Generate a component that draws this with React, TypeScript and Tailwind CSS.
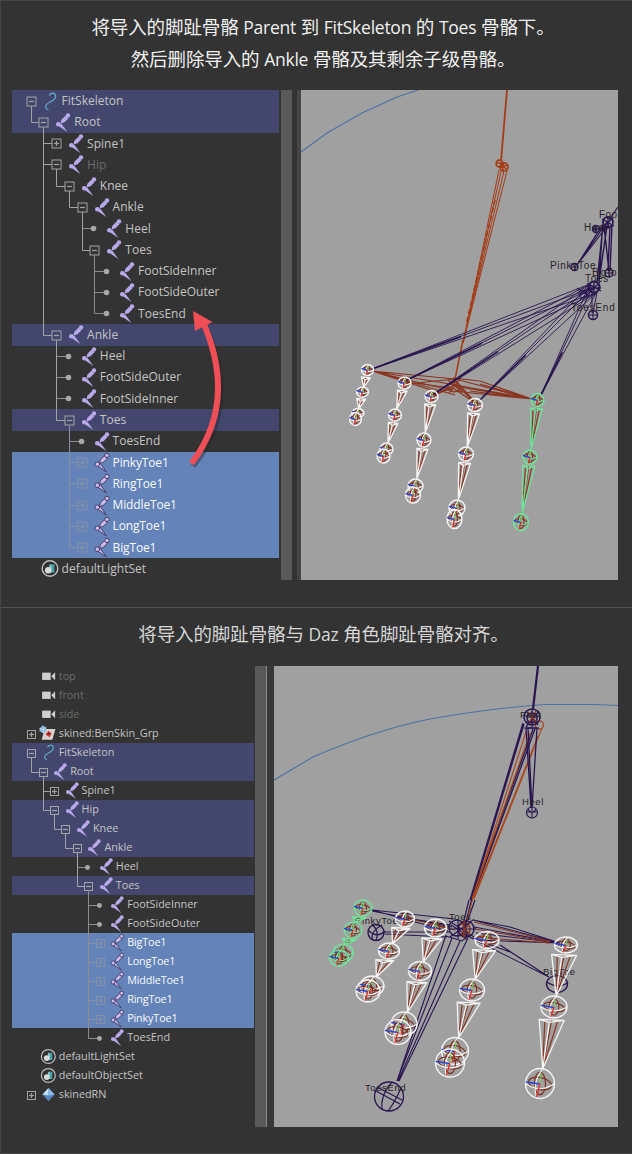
import React from "react";

type Toggle = "minus" | "plus" | "dot" | "none";
type IconName = "joint" | "curve" | "set" | "camera" | "group" | "ref";
type Tone = "normal" | "dim" | "related" | "selected";
interface Item {
  level: number;
  toggle: Toggle;
  icon: IconName;
  label: string;
  tone?: Tone;
  faded?: boolean;
}

const upper: Item[] = [
  { level: 0, toggle: "minus", icon: "curve", label: "FitSkeleton", tone: "related" },
  { level: 1, toggle: "minus", icon: "joint", label: "Root", tone: "related" },
  { level: 2, toggle: "plus", icon: "joint", label: "Spine1" },
  { level: 2, toggle: "minus", icon: "joint", label: "Hip", faded: true },
  { level: 3, toggle: "minus", icon: "joint", label: "Knee" },
  { level: 4, toggle: "minus", icon: "joint", label: "Ankle" },
  { level: 5, toggle: "dot", icon: "joint", label: "Heel" },
  { level: 5, toggle: "minus", icon: "joint", label: "Toes" },
  { level: 6, toggle: "dot", icon: "joint", label: "FootSideInner" },
  { level: 6, toggle: "dot", icon: "joint", label: "FootSideOuter" },
  { level: 6, toggle: "dot", icon: "joint", label: "ToesEnd" },
  { level: 2, toggle: "minus", icon: "joint", label: "Ankle", tone: "related" },
  { level: 3, toggle: "dot", icon: "joint", label: "Heel" },
  { level: 3, toggle: "dot", icon: "joint", label: "FootSideOuter" },
  { level: 3, toggle: "dot", icon: "joint", label: "FootSideInner" },
  { level: 3, toggle: "minus", icon: "joint", label: "Toes", tone: "related" },
  { level: 4, toggle: "dot", icon: "joint", label: "ToesEnd" },
  { level: 4, toggle: "plus", icon: "joint", label: "PinkyToe1", tone: "selected" },
  { level: 4, toggle: "plus", icon: "joint", label: "RingToe1", tone: "selected" },
  { level: 4, toggle: "plus", icon: "joint", label: "MiddleToe1", tone: "selected" },
  { level: 4, toggle: "plus", icon: "joint", label: "LongToe1", tone: "selected" },
  { level: 4, toggle: "plus", icon: "joint", label: "BigToe1", tone: "selected" },
  { level: 0, toggle: "none", icon: "set", label: "defaultLightSet" },
];

const lower: Item[] = [
  { level: 0, toggle: "none", icon: "camera", label: "top", faded: true },
  { level: 0, toggle: "none", icon: "camera", label: "front", faded: true },
  { level: 0, toggle: "none", icon: "camera", label: "side", faded: true },
  { level: 0, toggle: "plus", icon: "group", label: "skined:BenSkin_Grp" },
  { level: 0, toggle: "minus", icon: "curve", label: "FitSkeleton", tone: "related" },
  { level: 1, toggle: "minus", icon: "joint", label: "Root", tone: "related" },
  { level: 2, toggle: "plus", icon: "joint", label: "Spine1" },
  { level: 2, toggle: "minus", icon: "joint", label: "Hip", tone: "related" },
  { level: 3, toggle: "minus", icon: "joint", label: "Knee", tone: "related" },
  { level: 4, toggle: "minus", icon: "joint", label: "Ankle", tone: "related" },
  { level: 5, toggle: "dot", icon: "joint", label: "Heel" },
  { level: 5, toggle: "minus", icon: "joint", label: "Toes", tone: "related" },
  { level: 6, toggle: "dot", icon: "joint", label: "FootSideInner" },
  { level: 6, toggle: "dot", icon: "joint", label: "FootSideOuter" },
  { level: 6, toggle: "plus", icon: "joint", label: "BigToe1", tone: "selected" },
  { level: 6, toggle: "plus", icon: "joint", label: "LongToe1", tone: "selected" },
  { level: 6, toggle: "plus", icon: "joint", label: "MiddleToe1", tone: "selected" },
  { level: 6, toggle: "plus", icon: "joint", label: "RingToe1", tone: "selected" },
  { level: 6, toggle: "plus", icon: "joint", label: "PinkyToe1", tone: "selected" },
  { level: 6, toggle: "dot", icon: "joint", label: "ToesEnd" },
  { level: 0, toggle: "none", icon: "set", label: "defaultLightSet" },
  { level: 0, toggle: "none", icon: "set", label: "defaultObjectSet" },
  { level: 0, toggle: "plus", icon: "ref", label: "skinedRN" },
];

function NodeIcon({ name, selected, scale }: { name: IconName; selected: boolean; scale: number }) {
  const box = { width: 18 * scale, height: 19 * scale };
  return (
    <svg viewBox="0 0 18 19" style={box} className="shrink-0 overflow-visible">
      {name === "joint" && (
        <g fill={selected ? "#cdb9ee" : "#b9a9ea"} stroke={selected ? "#39365c" : "none"} strokeWidth="0.9">
          <path d="M9.4 2.8 12.6 5 8.6 9.2 4.4 10.6 5.4 6.8z" />
          <path d="M5 10.2 11.4 19 2.6 13z" />
          <circle cx="12" cy="2.4" r="2.2" />
          <circle cx="2.3" cy="11.2" r="2.3" />
        </g>
      )}
      {name === "curve" && (
        <path d="M5 3.4C8-.2 12.5 1 11.4 5.4 10.4 9.8 3 10 2 13.4c-.8 2.4.8 3.9 2.4 4.3" fill="none" stroke="#5ea9c6" strokeWidth="1.3" />
      )}
      {name === "set" && (
        <g transform="translate(-3 0)">
          <circle cx="9" cy="9.5" r="7.8" fill="#303030" stroke="#bdbdbd" strokeWidth="1.4" />
          <path d="M8.6 5.3h4.8v8.2H8.6z" fill="#4a9fa8" />
          <path d="m8.6 5.3 2 1.800v6.400H8z" fill="#86cdd0" />
          <circle cx="7.2" cy="11.3" r="3.2" fill="#d9d9d9" />
        </g>
      )}
      {name === "camera" && (
        <g fill="#cfcfcf">
          <rect x="-1" y="5.200" width="9.6" height="8.2" />
          <path d="M9.300 9.300 13.600 4.800v9z" />
        </g>
      )}
      {name === "group" && (
        <g transform="translate(1 0)">
          <path d="M.5 4.5H12.5L9 16.5H-3z" transform="translate(.5 0)" fill="#d8d4d0" />
          <path d="m5.4 6.5 3.4 3-2.5 4.2-4.6-3z" fill="#d43b3b" />
          <path d="m-4.8 3.8 3.4-3.5 4 2.5.2 4-3.6 2.4L-5 7z" fill="#86b5dd" />
          <path d="m-4.8 3.8 4 1.6 3.4-2.6M-.8 5.4v3.8" stroke="#cfe7fa" fill="none" />
          <circle cx="5.4" cy="9.8" r="1.3" fill="#6c2420" />
        </g>
      )}
      {name === "ref" && (
        <g transform="translate(1.8 0)">
          <path d="M4.4 2.2 11.2 9.5 4.4 17-2.4 9.5z" fill="#5587be" />
          <path d="M4.4 2.2v8.4L-2.4 9.5z" fill="#c3dcf2" />
          <path d="m4.4 2.2 6.8 7.3-6.8 1.1z" fill="#8db8e4" />
        </g>
      )}
    </svg>
  );
}

interface TreeProps {
  items: Item[];
  rowH: number;
  origin: number;
  step: number;
  scale: number;
  padTop: string;
  size: string;
}

function Tree({ items, rowH, origin, step, scale, padTop, size }: TreeProps) {
  const xs = (l: number) => Math.round(origin + l * step) + 0.5;
  const ys = (i: number) => Math.round(i * rowH + rowH / 2) + 0.5;
  const r = scale === 1 ? 4.5 : 4;
  return (
    <div className={`h-full bg-[#333333] ${padTop}`}>
      <div className="relative">
        {items.map((it, i) => {
          const tone = it.tone ?? "normal";
          const bg = tone === "selected" ? "bg-[#6483b8]" : tone === "related" ? "bg-[#43476e]" : "";
          const color = tone === "selected" ? "text-[#f8fafc] font-medium tracking-[-0.15px]" : it.faded ? "text-[#6b6b6b]" : "text-[#c4c4c4]";
          return (
            <div
              key={i}
              className={`flex items-center whitespace-nowrap ${bg}`}
              style={{ height: rowH, paddingLeft: origin + it.level * step + 13 * scale }}
            >
              <NodeIcon name={it.icon} selected={tone === "selected"} scale={scale} />
              <span className={`${size} ${color} leading-none`}>{it.label}</span>
            </div>
          );
        })}
        <svg className="pointer-events-none absolute inset-0 h-full w-full" fill="none" stroke="#8c8c8c">
          {items.map((it, i) => {
            let parent = -1;
            for (let k = i - 1; k >= 0; k--) {
              if (items[k].level < it.level) {
                parent = k;
                break;
              }
            }
            const x = xs(it.level);
            const y = ys(i);
            const boxed = it.toggle === "plus" || it.toggle === "minus";
            const stroke = it.tone === "selected" ? "#8590a4" : boxed ? "#a3a3a3" : "#8c8c8c";
            return (
              <g key={i} stroke={stroke}>
                {parent >= 0 && it.level > 0 && (
                  <path d={`M${xs(it.level - 1)} ${ys(parent) + r}V${y}H${x - (boxed ? r : 1)}`} />
                )}
                {boxed && <rect x={x - r} y={y - r} width={r * 2} height={r * 2} />}
                {boxed && <path d={`M${x - 2.5} ${y}h5`} strokeWidth="1.2" />}
                {it.toggle === "plus" && <path d={`M${x} ${y - 2.5}v5`} strokeWidth="1.2" />}
                {it.toggle === "dot" && <circle cx={x - 1} cy={y} r={2.8 * scale} fill="#a8a8a8" stroke="none" />}
              </g>
            );
          })}
        </svg>
      </div>
    </div>
  );
}

/* x, y, rx, ry */
type J = [number, number, number, number];

function Joint({ j, color }: { j: J; color: string }) {
  const [x, y, rx, ry] = j;
  return (
    <g fill="none">
      <g stroke="#7c2d1c" strokeWidth="1.1">
        <ellipse cx={x} cy={y} rx={rx * 0.8} ry={ry * 0.4} transform={`rotate(12 ${x} ${y})`} />
        <ellipse cx={x} cy={y} rx={rx * 0.38} ry={ry * 0.75} />
      </g>
      <g stroke={color}>
        <ellipse cx={x} cy={y} rx={rx} ry={ry} strokeWidth="1.4" />
        <path d={`M${x - rx} ${y}Q${x} ${y + ry * 0.7} ${x + rx} ${y}M${x + rx * 0.2} ${y - ry}Q${x - rx * 0.6} ${y} ${x - rx * 0.2} ${y + ry}`} strokeWidth="1.1" />
      </g>
      <path d={`M${x} ${y + 0.5}L${x - rx} ${y - 1.6}`} stroke="#2445d8" strokeWidth="1.4" />
      <path d={`M${x} ${y}L${x - rx * 0.25} ${y + ry * 0.9}`} stroke="#e32a25" strokeWidth="1.2" />
      <path d={`M${x} ${y}L${x + 1} ${y - ry * 0.7}`} stroke="#74c653" strokeWidth="1.1" />
    </g>
  );
}

function Chain({ joints, color, links, width }: { joints: J[]; color: string; links: number; width: number }) {
  return (
    <g>
      {joints.slice(0, links).map((a, i) => {
        const b = joints[i + 1];
        const dx = b[0] - a[0];
        const dy = b[1] - a[1];
        const len = Math.hypot(dx, dy);
        const ux = dx / len;
        const uy = dy / len;
        const bx = a[0] + ux * (a[3] + 1.5);
        const by = a[1] + uy * (a[3] + 1.5);
        const tx = b[0] - ux * b[3];
        const ty = b[1] - uy * b[3];
        const w = width;
        return (
          <g key={i} fill="none" strokeLinejoin="round">
            <path d={`M${bx - w * 0.55} ${by + 1}L${tx} ${ty}L${bx + w * 0.5} ${by + 1}M${bx} ${by}L${tx} ${ty}`} stroke="#8c3622" strokeWidth="1.2" />
            <path
              d={`M${bx - w} ${by}L${bx + w} ${by + 1}L${tx} ${ty}zM${bx - w} ${by}l${w * 0.8} 3l${w * 1.2} -2M${bx - w * 0.2} ${by + 3}L${tx} ${ty}`}
              stroke={color}
              strokeWidth="1.3"
            />
          </g>
        );
      })}
      {joints.map((j, i) => (
        <Joint key={i} j={j} color={color} />
      ))}
    </g>
  );
}

const white = "#f4f4f4";
const green = "#70e39a";
const purple = "#291650";

function UpperView() {
  const fan = [
    [372, 369],
    [407, 380],
    [434, 394],
    [480, 400],
    [541, 395],
  ];
  return (
    <svg viewBox="301 90 317 490" className="block h-full w-full bg-[#a0a0a0]" fill="none">
      <path d="M301 152 327 133 362 113 397 97 418 90" stroke="#4a72a8" strokeWidth="1.1" />
      <g stroke="#a43c16">
        <path d="M507 90 501 161" strokeWidth="1.8" />
        <circle cx="499.5" cy="163.5" r="3.4" strokeWidth="1.7" />
        <circle cx="504" cy="167" r="4" strokeWidth="1.7" />
        <path d="M497 163h9M503 162v10M500 168l7-3M501 164l6 6" strokeWidth="1.4" />
        <path d="M499 170 463 343M501.5 169 463 343M504 171 463 343M507 171 463 343" strokeWidth="1" />
        <path d="M463 340 454 384" strokeWidth="1.5" />
        <path d="M495 200 466 325" strokeDasharray="5 3" strokeWidth="1.5" />
      </g>
      <g stroke="#8a3520" strokeWidth="1.2">
        <path d="M372 371 455 379 532 399M372 371 453 391 532 399M372 371 450 384 532 399M372 371 455 395M372 371 440 393M453 378 480 381 532 399M453 386 532 399M480 384 532 399M470 391 532 399" />
        <path d="M406 382 453 388M407 384 455 379M434 395 453 388 475 403M434 395 456 384 475 403M453 378 475 402M448 380l14 12M461 378l-12 15" />
        <ellipse cx="454" cy="387" rx="6" ry="5" />
      </g>
      <g stroke={purple}>
        {fan.map(([x, y], i) => (
          <g key={i}>
            <path d={`M${x} ${y}L590 284M${x} ${y}L592 288M${x} ${y}L596 293`} strokeWidth={0.9} />
            <path d={`M${x} ${y}L${x + (594 - x) * 0.4} ${y + (288 - y) * 0.4}`} strokeWidth={1.7} />
          </g>
        ))}
        <circle cx="594" cy="287" r="5.5" strokeWidth="2" />
        <path d="M587 283l14 8M600 282l-12 12M588 288h13M594 281v13M577 288l12 8M580 295l12-10" strokeWidth="1.4" />
        <circle cx="583" cy="294" r="4" />
        <circle cx="593" cy="315" r="4.5" strokeWidth="1.5" />
        <path d="M589 315h9M593 311v9M592 293l0 20M597 292l-4 21" />
        <path d="M618 207 609 220M607 222 577 265M603 224 577 265M609 224 577 265" strokeWidth="1.2" />
        <path d="M603 226 597 282M607 226 599 281M610 226 608 271M604 226 609 271M612 225 610 271M602 235 599 281" strokeWidth="1.4" />
        <circle cx="608" cy="222" r="5" strokeWidth="1.8" />
        <path d="M602 219l12 7M613 218l-11 10M608 216v13" strokeWidth="1.4" />
        <circle cx="596" cy="229" r="3.5" strokeWidth="1.5" />
        <path d="M593 229h13M596 226v7" strokeWidth="1.4" />
        <circle cx="574.5" cy="267" r="3.5" strokeWidth="1.4" />
        <path d="M571 267h7M575 264v7" />
        <circle cx="609" cy="273" r="4" strokeWidth="1.4" />
        <path d="M605 273h8M609 269v8" />
      </g>
      <g fill="#262229" className="font-['Liberation_Sans'] text-[10px] tracking-[0.7px]">
        <text x="599" y="218" className="tracking-[0.4px]">Foo</text>
        <text x="584" y="231">Heel</text>
        <text x="550" y="269">PinkyToe</text>
        <text x="592" y="276" className="tracking-[-0.1px]">BigTo</text>
        <text x="585" y="282">Toes</text>
        <text x="571" y="311" className="tracking-[0.8px]">ToesEnd</text>
      </g>
      <Chain color={white} links={2} width={4.5} joints={[[367.5, 370, 6, 5.5], [362.5, 392, 6, 5], [358, 413, 6, 4.5], [355.5, 419, 6, 6.5]]} />
      <Chain color={white} links={2} width={4.8} joints={[[404.5, 383, 6.5, 6], [395, 415, 6.5, 6], [386.5, 449, 6.5, 6], [383.5, 456, 6.5, 7]]} />
      <Chain color={white} links={2} width={5.5} joints={[[431.5, 396.5, 6.5, 6], [424, 440, 7, 7], [415.5, 486, 7.5, 7], [413, 495, 7.5, 8]]} />
      <Chain color={white} links={2} width={6} joints={[[475, 405, 7.5, 6.5], [466, 454, 7.5, 7], [457, 508, 8, 8], [454.5, 519, 7.5, 9.5]]} />
      <Chain color={green} links={2} width={6} joints={[[537.5, 400, 6.5, 6.5], [530, 457, 7, 7], [521, 522, 7.5, 8.5]]} />
    </svg>
  );
}

function LowerView() {
  return (
    <svg viewBox="274 666 344 461" className="block h-full w-full bg-[#a0a0a0]" fill="none">
      <path d="M274 780 313 757Q375 730 430 719 500 707 547 704.5H595L618 705.5" stroke="#4a72a8" strokeWidth="1.1" />
      <path d="M538 666 533 709" stroke={purple} strokeWidth="2.2" />
      <g stroke={purple} strokeWidth="1.1">
        <path d="M523 723 470 900M524 724 471 900M535 729 472 900M533 729 471 900" strokeWidth="1.3" />
        <path d="M472 898 465 926M469 900 463 924M475 900 467 922" strokeWidth="1.2" />
      </g>
      <g stroke="#a8481c">
        <circle cx="539.5" cy="725" r="4" strokeWidth="1.3" />
        <path d="M526 732 472 899M530 733 472 899M538 736 473 899M542 728 474 899" strokeWidth="1.1" />
        <path d="M473 898 466 924" />
      </g>
      <g stroke={purple} strokeWidth="1.1">
        <circle cx="532" cy="717" r="8" strokeWidth="1.5" />
        <circle cx="532" cy="718" r="5" strokeWidth="1.5" />
        <path d="M524 716h16M532 709v18M526 711l12 14M539 711l-13 16M524 728h15M526 722h13" strokeWidth="1.2" />
        <path d="M526 728 531 808M537 728 532 808M528 728 532 808M526 728h11" strokeWidth="1.3" />
        <circle cx="532" cy="812.5" r="5.5" />
        <path d="M526 812h11M532 807v11M528 809q4 7 8 0" />
        <path d="M372 910 455 919M372 911 452 927M372 910 448 931M385 932H450M385 934 447 937M400 917 450 925" />
        <path d="M473 920 560 943M474 927 560 943M475 940 560 943M473 920 510 927 560 943M476 933 560 943" />
        <path d="M475 940 549 977M500 945 549 977M472 938 510 952" />
        <path d="M446 935 397 1081M452 938 397 1081M460 941 398 1081M468 938 399 1081M446 936 462 941 470 934" />
      </g>
      <g stroke="#8a3520">
        <path d="M474 922 550 941M475 929 550 942M475 937 550 943M410 919 450 928M438 926 455 930" />
        <circle cx="464" cy="929" r="6" strokeWidth="1.5" />
        <path d="M528 712l8 10M536 711l-7 12" strokeWidth="1.3" />
      </g>
      <g stroke={purple} strokeWidth="1.4">
        <circle cx="457" cy="928" r="8" />
        <circle cx="466" cy="929" r="8" />
        <path d="M449 921 474 937M473 920 450 937M449 929h27M458 919v20M466 920v20M451 925l22 14" strokeWidth="1.1" />
        <circle cx="376" cy="932.5" r="8" />
        <path d="M368 930q9 9 17 1M372 924q8 8 4 16M382 925q-11 6-10 14" strokeWidth="1.2" />
        <ellipse cx="557" cy="984" rx="10.5" ry="8.5" />
        <path d="M547 982q10 7 21 1" strokeWidth="1.1" />
        <circle cx="389" cy="1096.5" r="14.5" strokeWidth="1.3" />
        <path d="M377 1087 402 1100M376 1091 400 1104M392 1082q-12 13-10 28M401 1088q-6 14-13 23" strokeWidth="1.2" />
      </g>
      <g stroke="#8a3520">
        <path d="M461 923l9 12M470 923l-9 12M464 920v18" strokeWidth="1.2" />
      </g>
      <g fill="#262229" className="font-['Liberation_Sans'] text-[9.5px] tracking-[0.6px]">
        <text x="520" y="718">Foot</text>
        <text x="522" y="805">Heel</text>
        <text x="355" y="924">PinkyToe</text>
        <text x="449" y="920">Toes</text>
        <text x="543" y="975">BigToe</text>
        <text x="365" y="1091">ToesEnd</text>
      </g>
      <Chain color={green} links={2} width={7} joints={[[363, 908, 9, 8], [353, 930, 9, 8], [343, 953, 10, 9], [339, 958, 9.5, 8]]} />
      <Chain color={white} links={2} width={9} joints={[[405, 919, 9.5, 8], [389, 951, 10.5, 8], [372, 986, 12, 10], [368, 991, 12, 11]]} />
      <Chain color={white} links={2} width={10} joints={[[435.5, 928, 11, 9], [420, 971, 11.5, 9.5], [404, 1024, 13, 12], [398, 1032, 13, 12.5]]} />
      <Chain color={white} links={2} width={11.5} joints={[[487, 940, 12, 8.5], [472, 990, 12.5, 11], [455, 1051, 13.5, 13.5], [450, 1063, 14.5, 14]]} />
      <Chain color={white} links={2} width={12.5} joints={[[566, 945, 11.5, 8], [554, 1007, 13, 11], [540, 1083.5, 14.5, 15]]} />
    </svg>
  );
}

function Caption({ children, className }: { children: React.ReactNode; className: string }) {
  return <p className={`whitespace-nowrap text-center font-['Open_Sans','Noto_Sans_CJK_SC',sans-serif] font-normal ${className}`}>{children}</p>;
}

function Latin({ children }: { children: string }) {
  return <span className="text-[17.5px] tracking-[-0.25px]">{children}</span>;
}

export default function App() {
  return (
    <main className="flex h-[1154px] w-[632px] flex-col overflow-hidden border-l border-t border-[#454545] bg-[#333333] font-['Open_Sans','Noto_Sans',sans-serif]">
      <section className="flex h-[606px] shrink-0 flex-col">
        <div className="h-[89px] shrink-0 pl-[13px] pt-[10px] text-[18.5px] leading-8 text-[#f0f0f0]">
          <Caption className="tracking-[-0.1px]">
            将导入的脚趾骨骼 <Latin>Parent</Latin> 到 <Latin>FitSkeleton</Latin> 的 <Latin>Toes</Latin> 骨骼下。
          </Caption>
          <Caption className="tracking-[-0.1px]">
            然后删除导入的 <Latin>Ankle</Latin> 骨骼及其剩余子级骨骼。
          </Caption>
        </div>
        <div className="relative ml-[11px] flex h-[490px] shrink-0">
          <div className="w-[267px] shrink-0">
            <Tree items={upper} rowH={21.27} origin={18.6} step={12.75} scale={1} padTop="pt-[0.4px]" size="text-[12px]" />
          </div>
          <div className="ml-[2px] w-[11px] shrink-0 bg-[#595959]" />
          <div className="w-[5px] shrink-0 bg-[#333333]" />
          <div className="w-[4px] shrink-0 bg-[#454545]" />
          <div className="w-[317px] shrink-0">
            <UpperView />
          </div>
          <svg viewBox="180 300 50 176" className="absolute left-[168px] top-[210px] h-[176px] w-[50px]" fill="none">
            <path d="M193 466Q241 406 205 326" stroke="#222222" strokeOpacity=".4" strokeWidth="6" />
            <path d="M191.5 463.5Q238 402 203 322" stroke="#f04f58" strokeWidth="6" />
            <path d="M193 311 212.5 322 195 331z" fill="#f04f58" />
          </svg>
        </div>
      </section>
      <section className="flex h-[546px] shrink-0 flex-col border-t border-[#525252]">
        <div className="h-[58px] shrink-0 pt-[10px] text-[18.5px] leading-8 text-[#d6d6d6]">
          <Caption className="pl-[14px] tracking-[-0.1px]">
            将导入的脚趾骨骼与 <Latin>Daz</Latin> 角色脚趾骨骼对齐。
          </Caption>
        </div>
        <div className="ml-[11px] flex h-[461px] shrink-0">
          <div className="w-[242px] shrink-0">
            <Tree items={lower} rowH={19} origin={19.2} step={11.4} scale={0.89} padTop="pt-[0.5px]" size="text-[10.8px]" />
          </div>
          <div className="ml-px flex w-[12px] shrink-0 border-r border-[#8a8a8a] bg-[#595959]" />
          <div className="w-[7px] shrink-0 bg-[#383838]" />
          <div className="w-[344px] shrink-0">
            <LowerView />
          </div>
        </div>
      </section>
      <div className="h-px shrink-0 bg-[#444444]" />
    </main>
  );
}
